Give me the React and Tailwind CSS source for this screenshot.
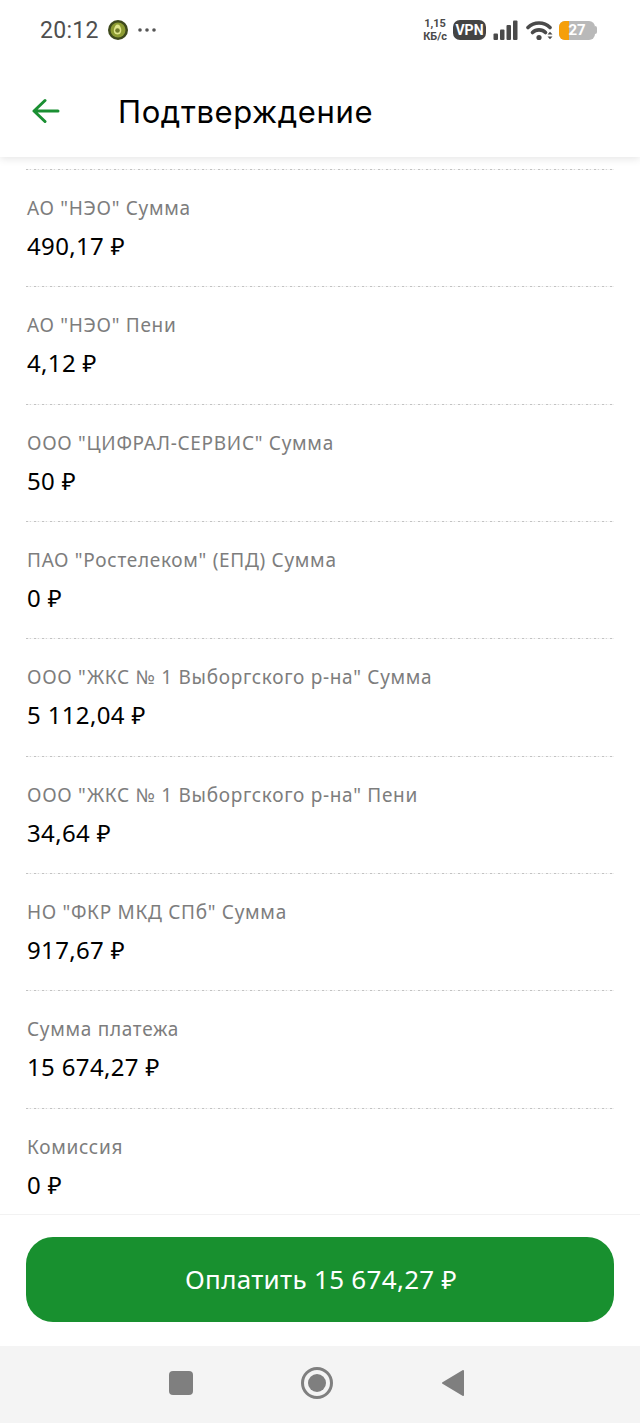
const rows = [
  ['АО "НЭО" Сумма', '490,17 ₽'],
  ['АО "НЭО" Пени', '4,12 ₽'],
  ['ООО "ЦИФРАЛ-СЕРВИС" Сумма', '50 ₽'],
  ['ПАО "Ростелеком" (ЕПД) Сумма', '0 ₽'],
  ['ООО "ЖКС № 1 Выборгского р-на" Сумма', '5 112,04 ₽'],
  ['ООО "ЖКС № 1 Выборгского р-на" Пени', '34,64 ₽'],
  ['НО "ФКР МКД СПб" Сумма', '917,67 ₽'],
  ['Сумма платежа', '15 674,27 ₽'],
  ['Комиссия', '0 ₽'],
];

function Row({ label, value }) {
  return (
    <div className="h-[117.33px] shrink-0 mx-[26px] flex flex-col">
      <div className="h-px bg-[repeating-linear-gradient(90deg,#c2c2c2_0,#c2c2c2_2px,#f0f0f0_2px,#f0f0f0_4px,#d4d4d4_4px,#d4d4d4_5px,#f6f6f6_5px,#f6f6f6_8px)]" />
      <div className="mt-[25px] ml-px text-[19px] leading-[26px] text-[#7d7d7d] tracking-[0.7px] whitespace-nowrap">{label}</div>
      <div className="mt-[12px] ml-px text-[24px] leading-[26px] text-black tracking-[0.35px] whitespace-nowrap">{value}</div>
    </div>
  );
}

export default function App() {
  return (
    <div className="w-[640px] h-[1423px] flex flex-col bg-white overflow-hidden font-['Noto_Sans','Liberation_Sans',sans-serif]">
      <div className="h-[157px] shrink-0 bg-white shadow-[0_2px_8px_rgba(0,0,0,0.10)] z-10 flex flex-col">
        <div className="h-[60px] flex items-center pl-[40px] pr-[43px]">
          <span className="text-[23px] leading-none text-[#4f4f4f] font-['Roboto',sans-serif] tracking-[0.3px]">20:12</span>
          <svg className="ml-[9px]" width="20" height="20" viewBox="0 0 20 20">
            <circle cx="10" cy="10" r="10" fill="#3f4a1c" />
            <circle cx="10" cy="10" r="7.500" fill="#8d9c32" />
            <path d="M9.500 4.500c2 0 2.800 1.800 3.400 3.500 1 2.800.2 6.500-3.400 6.500-3.300 0-4.300-3.400-3.300-6 .7-1.900 1.500-4 3.300-4z" fill="#dfe58a" />
            <circle cx="9.500" cy="10.500" r="2.300" fill="#6f7a2a" />
          </svg>
          <svg className="ml-[9px]" width="20" height="6" viewBox="0 0 20 6">
            <circle cx="3" cy="3" r="1.800" fill="#555" />
            <circle cx="10" cy="3" r="1.800" fill="#555" />
            <circle cx="17" cy="3" r="1.800" fill="#555" />
          </svg>
          <div className="ml-auto flex items-center">
            <div className="flex flex-col items-center text-[11px] leading-[13px] font-bold text-[#4a4a4a] font-['Roboto',sans-serif]">
              <span>1,15</span>
              <span>КБ/с</span>
            </div>
            <div className="ml-[6px] w-[33px] h-[20px] rounded-[7px] bg-[#444] text-white text-[14px] font-bold leading-[20px] text-center font-['Roboto',sans-serif]">VPN</div>
            <svg className="ml-[7px]" width="25" height="21" viewBox="0 0 25 21">
              <rect x="0.500" y="13.500" width="4.500" height="6.500" rx="1" fill="#4a4a4a" />
              <rect x="7" y="9.500" width="4.500" height="10.500" rx="1" fill="#4a4a4a" />
              <rect x="13.500" y="5" width="4.500" height="15" rx="1" fill="#4a4a4a" />
              <rect x="20" y="0.500" width="4.500" height="19.500" rx="1" fill="#4a4a4a" />
            </svg>
            <svg className="ml-[8px]" width="28" height="21" viewBox="0 0 28 21" fill="none" stroke="#4a4a4a" strokeWidth="3.600" strokeLinecap="round">
              <path d="M2 7.500C8 1.500 18 1.500 24 7.500" />
              <path d="M6.500 12.500C10 9 16 9 19.500 12.500" />
              <circle cx="13" cy="17.500" r="2.600" fill="#4a4a4a" stroke="none" />
              <path d="M21.500 14.500l2.500-2.700 2.500 2.700zM21.500 16.500l2.500 2.700 2.500-2.700z" fill="#4a4a4a" stroke="none" />
            </svg>
            <div className="ml-[5px] flex items-center">
              <div className="relative w-[36px] h-[19px] rounded-[6px] bg-[#b9b9b9] overflow-hidden flex items-center justify-center">
                <div className="absolute left-0 top-0 bottom-0 w-[10px] bg-[#f59f0a]" />
                <span className="relative text-white text-[15px] font-bold leading-none font-['Roboto',sans-serif]">27</span>
              </div>
              <div className="w-[2px] h-[8px] rounded-r-sm bg-[#b9b9b9]" />
            </div>
          </div>
        </div>
        <div className="flex-1 flex items-center pl-[32px] pt-[8px] pb-[3px]">
          <svg width="28" height="26" viewBox="0 0 28 26" fill="none" stroke="#1a8f32" strokeWidth="3" strokeLinecap="round" strokeLinejoin="round">
            <path d="M26 13H3M13 2.500 2 13l11 10.500" />
          </svg>
          <span className="ml-[58px] text-[31px] leading-none text-black font-['Inter','Noto_Sans',sans-serif] tracking-[0.6px]">Подтверждение</span>
        </div>
      </div>

      <div className="flex-1 min-h-0 overflow-hidden pt-[12px] flex flex-col">
        {rows.map(([l, v]) => <Row key={l} label={l} value={v} />)}
      </div>

      <div className="h-[132px] shrink-0 border-t border-[#f2f2f2] bg-white pt-[22px] px-[26px]">
        <div className="h-[85px] rounded-[27px] bg-[#18902f] flex items-center justify-center text-white text-[26px] leading-none tracking-[0.3px] pb-[2px] pl-[2px]">
          Оплатить 15 674,27 ₽
        </div>
      </div>

      <div className="h-[77px] shrink-0 bg-[#f4f4f4] flex items-center pb-[4px]">
        <div className="ml-[169px] w-[24px] h-[24px] rounded-[4px] bg-[#7f7f7f]" />
        <div className="ml-[108px] w-[32px] h-[32px] rounded-full border-[3px] border-[#7f7f7f] flex items-center justify-center">
          <div className="w-[18px] h-[18px] rounded-full bg-[#7f7f7f]" />
        </div>
        <svg className="ml-[108px]" width="24" height="28" viewBox="0 0 24 28">
          <path d="M22 2 2 14l20 12z" fill="#7f7f7f" stroke="#7f7f7f" strokeWidth="2" strokeLinejoin="round" />
        </svg>
      </div>
    </div>
  );
}
